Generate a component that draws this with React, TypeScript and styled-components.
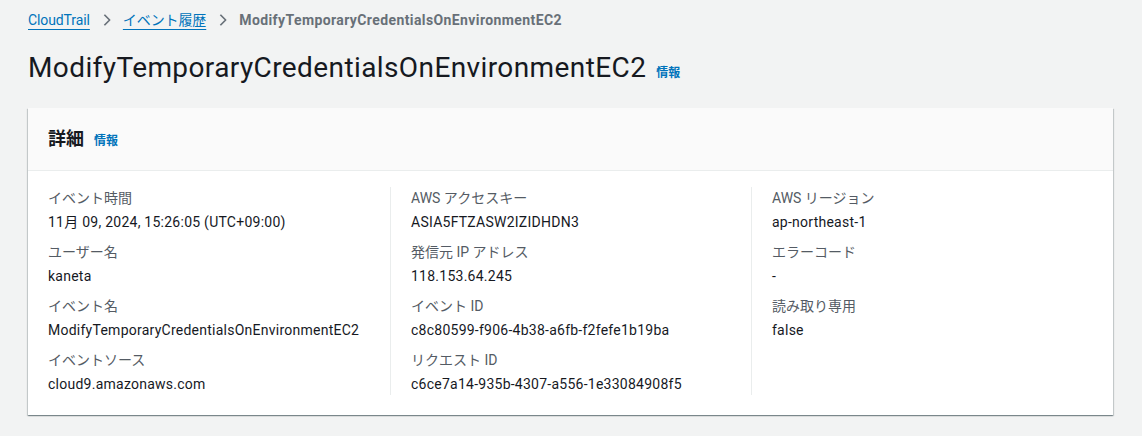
import React from "react";
import styled, { createGlobalStyle } from "styled-components";

const GlobalStyle = createGlobalStyle`
  html, body {
    margin: 0;
    padding: 0;
    background: #f2f3f3;
  }
  body {
    font-family: Roboto, "Noto Sans CJK JP", sans-serif;
    color: #16191f;
  }
`;

const Page = styled.div`
  padding: 9px 29px 20px 28px;
`;

const Breadcrumbs = styled.nav`
  display: flex;
  align-items: center;
  height: 22px;
  font-size: 14px;
`;

const Crumb = styled.a`
  color: #0073bb;
  text-decoration: underline;
  text-underline-offset: 4px;
  line-height: 22px;
  letter-spacing: -0.1px;
`;

const CurrentCrumb = styled.span`
  color: #687078;
  font-weight: 700;
  line-height: 22px;
  letter-spacing: 0.4px;
`;

const Chevron = styled.svg`
  width: 14px;
  height: 14px;
  margin: 0 9px 0 10px;
  color: #687078;
`;

const TitleRow = styled.div`
  display: flex;
  align-items: baseline;
  margin-top: 17px;
`;

const Title = styled.h1`
  margin: 0;
  font-size: 28px;
  font-weight: 400;
  line-height: 40px;
  letter-spacing: 0.4px;
  color: #16191f;
`;

const Info = styled.a`
  color: #0073bb;
  font-size: 12px;
  font-weight: 700;
  margin-left: 10px;
  text-decoration: none;
`;

const Card = styled.section`
  margin-top: 20px;
  background: #fff;
  box-shadow: 0 1px 1px 0 rgba(0, 28, 36, 0.3),
    1px 1px 1px 0 rgba(0, 28, 36, 0.15), -1px 1px 1px 0 rgba(0, 28, 36, 0.15);
`;

const CardHeader = styled.header`
  display: flex;
  align-items: baseline;
  padding: 20px 20px;
  background: #fafafa;
  border-bottom: 1px solid #eaeded;
`;

const CardTitle = styled.h2`
  margin: 0;
  font-size: 18px;
  font-weight: 700;
  line-height: 22px;
`;

const CardBody = styled.div`
  display: grid;
  grid-template-columns: 342fr 361fr 342fr;
  padding: 16px 20px 20px;
`;

const Column = styled.div<{ $divider?: boolean }>`
  display: flex;
  flex-direction: column;
  gap: 8px;
  padding-left: ${(p) => (p.$divider ? "20px" : "0")};
  border-left: ${(p) => (p.$divider ? "1px solid #eaeded" : "none")};
`;

const Field = styled.div`
  display: flex;
  flex-direction: column;
  gap: 2px;
`;

const Label = styled.div`
  font-size: 14px;
  line-height: 22px;
  color: #545b64;
`;

const Value = styled.div`
  font-size: 14px;
  line-height: 22px;
  letter-spacing: 0.25px;
  color: #16191f;
`;

const ChevronIcon = () => (
  <Chevron viewBox="0 0 16 16" fill="none">
    <path
      d="M5 2l6 6-6 6"
      stroke="currentColor"
      strokeWidth="2"
      strokeLinejoin="round"
    />
  </Chevron>
);

const columns: [string, string][][] = [
  [
    ["イベント時間", "11月 09, 2024, 15:26:05 (UTC+09:00)"],
    ["ユーザー名", "kaneta"],
    ["イベント名", "ModifyTemporaryCredentialsOnEnvironmentEC2"],
    ["イベントソース", "cloud9.amazonaws.com"],
  ],
  [
    ["AWS アクセスキー", "ASIA5FTZASW2IZIDHDN3"],
    ["発信元 IP アドレス", "118.153.64.245"],
    ["イベント ID", "c8c80599-f906-4b38-a6fb-f2fefe1b19ba"],
    ["リクエスト ID", "c6ce7a14-935b-4307-a556-1e33084908f5"],
  ],
  [
    ["AWS リージョン", "ap-northeast-1"],
    ["エラーコード", "-"],
    ["読み取り専用", "false"],
  ],
];

export default function App() {
  return (
    <Page>
      <GlobalStyle />
      <Breadcrumbs>
        <Crumb>CloudTrail</Crumb>
        <ChevronIcon />
        <Crumb>イベント履歴</Crumb>
        <ChevronIcon />
        <CurrentCrumb>ModifyTemporaryCredentialsOnEnvironmentEC2</CurrentCrumb>
      </Breadcrumbs>
      <TitleRow>
        <Title>ModifyTemporaryCredentialsOnEnvironmentEC2</Title>
        <Info>情報</Info>
      </TitleRow>
      <Card>
        <CardHeader>
          <CardTitle>詳細</CardTitle>
          <Info>情報</Info>
        </CardHeader>
        <CardBody>
          {columns.map((fields, i) => (
            <Column key={i} $divider={i > 0}>
              {fields.map(([label, value]) => (
                <Field key={label}>
                  <Label>{label}</Label>
                  <Value>{value}</Value>
                </Field>
              ))}
            </Column>
          ))}
        </CardBody>
      </Card>
    </Page>
  );
}
